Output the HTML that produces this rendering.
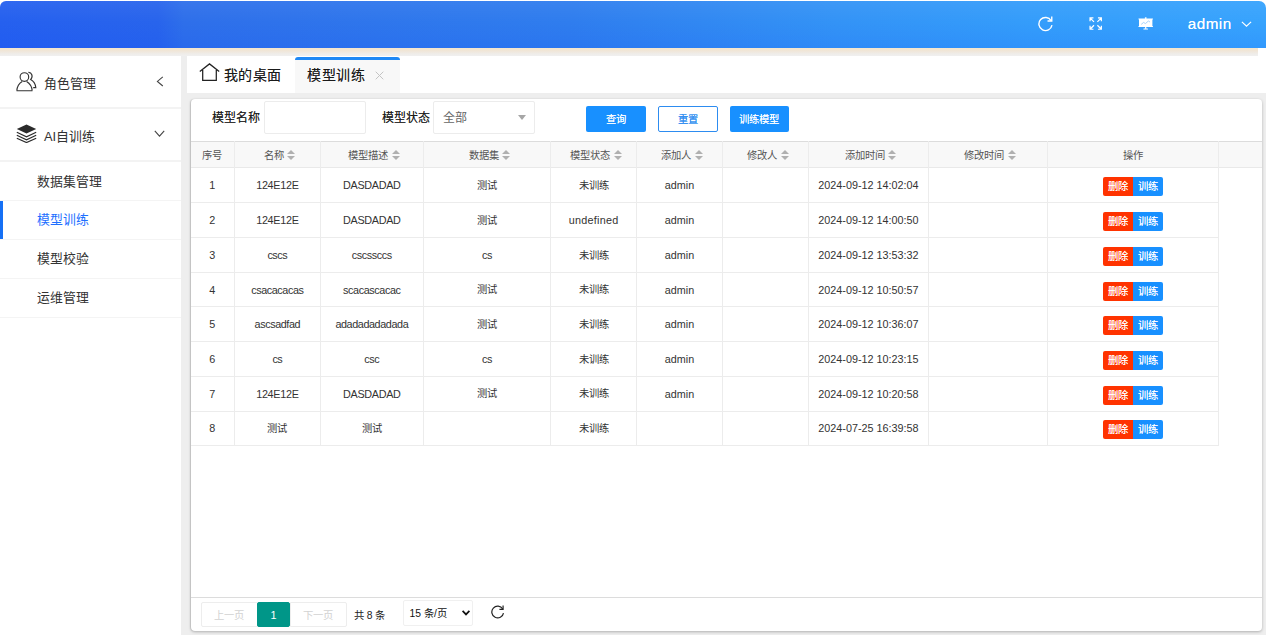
<!DOCTYPE html>
<html lang="zh-CN">
<head>
<meta charset="utf-8">
<title>模型训练</title>
<style>
*{box-sizing:border-box;margin:0;padding:0}
html,body{width:1266px;height:635px;overflow:hidden}
body{position:relative;background:#fff;font-family:"Liberation Sans",sans-serif;color:#333;font-size:12px}
.abs{position:absolute}
/* ---------- header ---------- */
#hdr{left:0;top:1px;width:1266px;height:47px;border-radius:6px 7px 0 0;
 background:linear-gradient(180deg,rgba(255,255,255,.05) 0%,rgba(255,255,255,0) 45%,rgba(0,60,255,.10) 100%),linear-gradient(90deg,#2560ef 0%,#2864ec 12.5%,#2e6fea 14.5%,#2f7dee 45%,#3393f6 66%,#349dfb 82%,#37a3fd 100%)}
#hdrshadow{left:0;top:48px;width:1258px;height:7.6px;background:linear-gradient(180deg,#f6e6cb 0%,#f0e6d8 35%,#efece8 70%,#f0f0f0 100%)}
#pagebg{left:0;top:55.6px;width:1266px;height:580px;background:#eeeeee}
.hicon{position:absolute}
#admin{left:1187.8px;top:14.4px;font-size:15.2px;letter-spacing:.5px;line-height:20px;color:#fff;text-shadow:0 0 .5px rgba(255,255,255,.8)}
/* ---------- sidebar ---------- */
#side{left:0;top:55.6px;width:181px;height:580px;background:#fff}
.mi{position:absolute;left:0;width:181px;height:53px;border-bottom:2px solid #f3f3f3}
.mi .t{position:absolute;left:44px;top:18.6px;font-size:12.86px;line-height:20px;color:#333;white-space:nowrap}
.si{position:absolute;left:0;width:181px;height:38.9px;border-bottom:1.2px solid #f4f4f4}
.si .t{position:absolute;left:37.4px;top:9.5px;font-size:12.86px;line-height:20px;color:#333;white-space:nowrap}
.si.on .t{color:#1e6fff}
.si.on:before{content:"";position:absolute;left:0;top:0;width:3.4px;height:38.4px;background:#1570f5}
/* ---------- tabs ---------- */
#tabs{left:187px;top:56px;width:1079px;height:37px;background:#fff}
#tabon{left:295px;top:57px;width:105px;height:36px;background:#f8f8f8;border-top:3.2px solid #1e88f5;border-radius:3px 3px 0 0}
.tt{position:absolute;font-size:14px;letter-spacing:0.45px;line-height:20px;color:#1a1a1a;text-shadow:0 0 .4px rgba(0,0,0,.45);white-space:nowrap}
/* ---------- card ---------- */
#card{left:191px;top:99px;width:1071px;height:532px;background:#fff;border-radius:4px;box-shadow:0 1px 3px rgba(0,0,0,.26),-1px 0 1px rgba(0,0,0,.10)}
.lbl{position:absolute;font-size:12px;font-weight:500;line-height:16px;color:#1c1c1c;text-shadow:0 0 .5px rgba(0,0,0,.55);white-space:nowrap}
.inp{position:absolute;border:1px solid #ececec;border-radius:2px;background:#fff}
.btn{position:absolute;top:106px;height:26px;width:59.6px;border-radius:2px;font-size:10.3px;line-height:27.2px;text-align:center;color:#fff;background:#1890ff;white-space:nowrap;font-weight:normal;text-shadow:0 0 .6px rgba(255,255,255,.85)}
.btn.o{background:#fff;border:1px solid #2d8cf0;color:#2d8cf0;line-height:25.2px;text-shadow:0 0 .6px rgba(45,140,240,.85)}

/* ---------- table ---------- */
#thead{left:191px;top:141px;width:1071px;height:27px;background:#f8f8f8;border-top:1px solid #dcdcdc;border-bottom:1px solid #e9e9e9}
table{position:absolute;left:190.6px;top:141px;border-collapse:collapse;table-layout:fixed;width:1028px}
th,td{border-right:1px solid #ececec;border-bottom:1px solid #ececec;text-align:center;vertical-align:middle;overflow:hidden;white-space:nowrap;padding:0;font-weight:normal}
th.s{padding-left:4.6px}
th{height:27px;font-size:10.3px;color:#555;border-bottom-color:transparent}
td{height:34.72px;font-size:10.8px;color:#333}
td.c{font-size:10.3px}
td.c{position:relative;top:-0.8px}
td.lc{letter-spacing:-0.4px}
td.up{letter-spacing:-0.3px}
td.un{letter-spacing:0.28px}
.sort{display:inline-block;position:relative;width:8px;height:10px;margin-left:3.4px;vertical-align:-1.6px}
.sort:before,.sort:after{content:"";position:absolute;left:0;border-left:4px solid transparent;border-right:4px solid transparent}
.sort:before{top:0;border-bottom:4.3px solid #b0b0b0}
.sort:after{top:5.4px;border-top:4.3px solid #b0b0b0}
.ops{display:inline-block;height:19px;vertical-align:middle;font-size:0;margin-top:3px}
.ops b{display:inline-block;width:30px;height:19px;line-height:20.2px;font-size:10.3px;color:#fff;font-weight:normal;text-align:center;text-shadow:0 0 .6px rgba(255,255,255,.85)}
.ops b.d{background:#ff3300;border-radius:2px 0 0 2px}
.ops b.r{background:#1890ff;border-radius:0 2px 2px 0}

/* ---------- select / pagination ---------- */
#selt{left:442.5px;top:110.2px;font-size:12px;line-height:16px;color:#666}
#selarr{left:517.8px;top:114.8px;width:0;height:0;border-left:4.7px solid transparent;border-right:4.7px solid transparent;border-top:5.1px solid #a6a6a6}
#pgline{left:190.6px;top:597px;width:1071px;height:1px;background:#dcdcdc}
.pg{position:absolute;top:602px;height:25px;border:1px solid #ededed;font-size:10.3px;line-height:25px;text-align:center;color:#d2d2d2;background:#fff;white-space:nowrap}
.pg.cur{background:#009688;border-color:#009688;color:#fff;border-radius:2px;font-size:10.8px}
#pgtot{left:354px;top:606px;font-size:10.3px;line-height:20px;color:#222;white-space:nowrap}
#pgsel{left:403.4px;top:600.4px;width:69.3px;height:25.2px;border:1px solid #f0f0f0;border-radius:2px;background:#fff}
#pgselt{left:409.6px;top:603.5px;font-size:10.3px;line-height:20px;color:#111;white-space:nowrap}
</style>
</head>
<body>
<div class="abs" id="pagebg"></div>
<div class="abs" id="hdrshadow"></div>
<div class="abs" id="hdr"></div>
<div class="abs" id="admin">admin</div>

<div class="abs" id="side">
  <div class="mi" style="top:0"><span class="t">角色管理</span></div>
  <div class="mi" style="top:53px"><span class="t">AI自训练</span></div>
  <div class="si" style="top:106.5px"><span class="t">数据集管理</span></div>
  <div class="si on" style="top:145.4px"><span class="t">模型训练</span></div>
  <div class="si" style="top:184.3px"><span class="t">模型校验</span></div>
  <div class="si" style="top:223.2px"><span class="t">运维管理</span></div>
</div>

<div class="abs" id="tabs"></div>
<div class="abs" id="tabon"></div>
<div class="tt" style="left:224px;top:65.1px">我的桌面</div>
<div class="tt" style="left:307.4px;top:65.1px">模型训练</div>

<div class="abs" id="card"></div>
<div class="lbl" style="left:212.4px;top:109.5px">模型名称</div>
<div class="inp" style="left:264px;top:101px;width:102px;height:33px"></div>
<div class="lbl" style="left:381.8px;top:109.5px">模型状态</div>
<div class="inp" style="left:433px;top:101px;width:102px;height:33px"></div>
<div class="btn" style="left:586.1px">查询</div>
<div class="btn o" style="left:658.2px">重置</div>
<div class="btn" style="left:729.6px">训练模型</div>
<div class="abs" id="thead"></div>
<table>
<colgroup><col style="width:43.7px"><col style="width:86.2px"><col style="width:102.7px"><col style="width:127.5px"><col style="width:85.9px"><col style="width:86.0px"><col style="width:86.0px"><col style="width:119.8px"><col style="width:119.1px"><col style="width:171.1px"></colgroup>
<tr><th>序号</th><th class="s">名称<i class="sort"></i></th><th class="s">模型描述<i class="sort"></i></th><th class="s">数据集<i class="sort"></i></th><th class="s">模型状态<i class="sort"></i></th><th class="s">添加人<i class="sort"></i></th><th class="s">修改人<i class="sort"></i></th><th class="s">添加时间<i class="sort"></i></th><th class="s">修改时间<i class="sort"></i></th><th>操作</th></tr>
<tr><td>1</td><td class="up">124E12E</td><td class="up">DASDADAD</td><td class="c">测试</td><td class="c">未训练</td><td>admin</td><td></td><td>2024-09-12 14:02:04</td><td></td><td><span class="ops"><b class="d">删除</b><b class="r">训练</b></span></td></tr>
<tr><td>2</td><td class="up">124E12E</td><td class="up">DASDADAD</td><td class="c">测试</td><td class="un">undefined</td><td>admin</td><td></td><td>2024-09-12 14:00:50</td><td></td><td><span class="ops"><b class="d">删除</b><b class="r">训练</b></span></td></tr>
<tr><td>3</td><td class="lc">cscs</td><td class="lc">cscssccs</td><td class="lc">cs</td><td class="c">未训练</td><td>admin</td><td></td><td>2024-09-12 13:53:32</td><td></td><td><span class="ops"><b class="d">删除</b><b class="r">训练</b></span></td></tr>
<tr><td>4</td><td class="lc">csacacacas</td><td class="lc">scacascacac</td><td class="c">测试</td><td class="c">未训练</td><td>admin</td><td></td><td>2024-09-12 10:50:57</td><td></td><td><span class="ops"><b class="d">删除</b><b class="r">训练</b></span></td></tr>
<tr><td>5</td><td class="lc">ascsadfad</td><td class="lc">adadadadadada</td><td class="c">测试</td><td class="c">未训练</td><td>admin</td><td></td><td>2024-09-12 10:36:07</td><td></td><td><span class="ops"><b class="d">删除</b><b class="r">训练</b></span></td></tr>
<tr><td>6</td><td class="lc">cs</td><td class="lc">csc</td><td class="lc">cs</td><td class="c">未训练</td><td>admin</td><td></td><td>2024-09-12 10:23:15</td><td></td><td><span class="ops"><b class="d">删除</b><b class="r">训练</b></span></td></tr>
<tr><td>7</td><td class="up">124E12E</td><td class="up">DASDADAD</td><td class="c">测试</td><td class="c">未训练</td><td>admin</td><td></td><td>2024-09-12 10:20:58</td><td></td><td><span class="ops"><b class="d">删除</b><b class="r">训练</b></span></td></tr>
<tr><td>8</td><td class="c">测试</td><td class="c">测试</td><td></td><td class="c">未训练</td><td></td><td></td><td>2024-07-25 16:39:58</td><td></td><td><span class="ops"><b class="d">删除</b><b class="r">训练</b></span></td></tr>
</table>
<div class="abs" id="selt">全部</div>
<div class="abs" id="selarr"></div>
<div class="abs" id="pgline"></div>
<div class="pg" style="left:200.9px;width:56.8px;border-radius:2px 0 0 2px">上一页</div>
<div class="pg" style="left:289.8px;width:56.8px;border-radius:0 2px 2px 0">下一页</div>
<div class="pg cur" style="left:257.1px;width:32.8px">1</div>
<div class="abs" id="pgtot">共 8 条</div>
<div class="abs" id="pgsel"></div>
<div class="abs" id="pgselt">15 条/页</div>
<svg class="abs" style="left:460.5px;top:609px" width="10" height="8" viewBox="0 0 10 8"><path d="M1.6 1.8 L5 5.4 L8.4 1.8" fill="none" stroke="#111" stroke-width="1.7"/></svg>
<svg class="abs" style="left:490.4px;top:603.9px" width="15.4" height="15.4" viewBox="0 0 16 16"><path d="M13.2 5.2 A6.1 6.1 0 1 0 14 9.4" fill="none" stroke="#222" stroke-width="1.25"/><path d="M13.6 1.6 V5.6 H9.8" fill="none" stroke="#222" stroke-width="1.25"/></svg>
<!-- header icons -->
<svg class="abs" style="left:1036.9px;top:15px" width="17" height="17" viewBox="0 0 16 16"><path d="M13.3 5.3 A6.2 6.2 0 1 0 14.1 9.6" fill="none" stroke="#fff" stroke-width="1.3"/><path d="M13.9 1.5 V5.7 H9.9" fill="none" stroke="#fff" stroke-width="1.3"/></svg>
<svg class="abs" style="left:1089px;top:17px" width="13.4" height="13.2" viewBox="0 0 14 14" fill="none" stroke="#fff" stroke-width="1.3"><path d="M1 4.6 V1 H4.6 M1 1 L5.2 5.2"/><path d="M9.4 1 H13 V4.6 M13 1 L8.8 5.2"/><path d="M1 9.4 V13 H4.6 M1 13 L5.2 8.8"/><path d="M9.4 13 H13 V9.4 M13 13 L8.8 8.8"/></svg>
<svg class="abs" style="left:1138.2px;top:17.3px" width="15.4" height="14" viewBox="0 0 15.4 14"><path d="M0.5 1.6 H14.9 V2.6 H14.4 V8.9 H14.9 V9.9 H0.5 V8.9 H1 V2.6 H0.5 Z" fill="#fff"/><rect x="6.9" y="0.3" width="1.6" height="1.6" fill="#fff"/><rect x="7.1" y="9.8" width="1.2" height="2" fill="#fff"/><rect x="5.4" y="11.6" width="4.6" height="1" rx="0.5" fill="#fff"/><path d="M3.2 7.4 L5.6 5.4 L7.4 6.6 L10.4 4 L12 5" fill="none" stroke="#9ccdfc" stroke-width="0.9"/></svg>
<svg class="abs" style="left:1241.4px;top:20.6px" width="11" height="7" viewBox="0 0 11 7"><path d="M0.9 0.9 L5.5 5.1 L10.1 0.9" fill="none" stroke="#fff" stroke-width="1.2"/></svg>
<!-- sidebar icons -->
<svg class="abs" style="left:15.6px;top:71px" width="21" height="21" viewBox="0 0 21 21" fill="none" stroke="#333" stroke-width="1.15"><circle cx="8.4" cy="6" r="4.3"/><path d="M0.8 19.6 C1.2 14.6 4.2 11.6 6.2 10.4 M10.6 10.4 C12.6 11.6 15.8 14.6 16.2 19.6 M0.5 19.7 H16.5"/><path d="M12.4 1.4 C15.6 1.2 17.6 5.6 14.6 8.6 C17.4 10 19.4 13.2 19.8 16.6 H17.2"/></svg>
<svg class="abs" style="left:15.6px;top:124.4px" width="21" height="19" viewBox="0 0 21 19"><path d="M10.5 0.6 L20.2 5 L10.5 9.6 L0.8 5 Z" fill="#2b2b2b"/><path d="M0.8 8.2 L10.5 12.8 L20.2 8.2 M0.8 11.2 L10.5 15.8 L20.2 11.2 M0.8 14.2 L10.5 18.6 L20.2 14.2" fill="none" stroke="#2b2b2b" stroke-width="1.1"/></svg>
<svg class="abs" style="left:155.8px;top:76.2px" width="8" height="11" viewBox="0 0 8 11"><path d="M6.8 0.8 L1.4 5.4 L6.8 10" fill="none" stroke="#444" stroke-width="1.1"/></svg>
<svg class="abs" style="left:153.8px;top:130.4px" width="11" height="8" viewBox="0 0 11 8"><path d="M0.8 0.9 L5.5 6.2 L10.2 0.9" fill="none" stroke="#444" stroke-width="1.1"/></svg>
<!-- tab icons -->
<svg class="abs" style="left:199.4px;top:63px" width="21" height="18.4" viewBox="0 0 21 18.4"><path d="M0.8 8.4 L10.5 0.9 L20.2 8.4 M3.7 7 V17.4 H17.3 V7" fill="none" stroke="#222" stroke-width="1.25"/></svg>
<svg class="abs" style="left:375.4px;top:71.4px" width="9" height="9" viewBox="0 0 9 9"><path d="M0.7 0.7 L8.3 8.3 M8.3 0.7 L0.7 8.3" fill="none" stroke="#c4c4c4" stroke-width="1"/></svg>
</body>
</html>
